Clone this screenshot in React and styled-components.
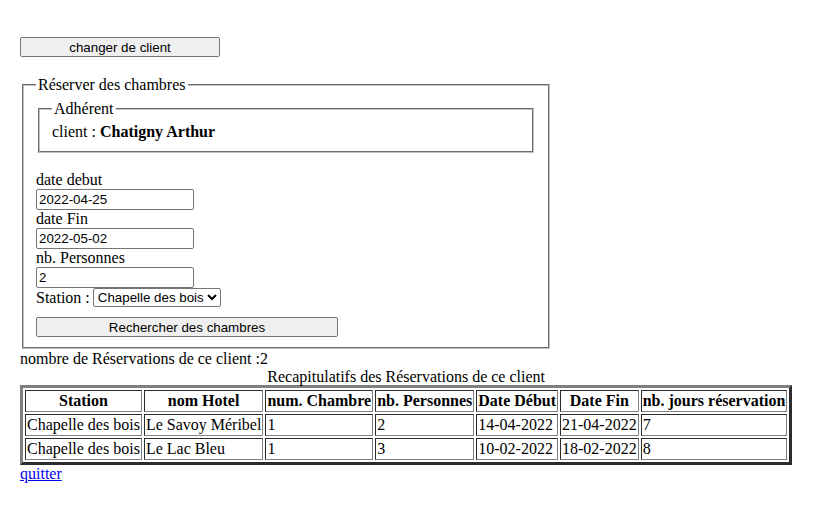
import React from "react";
import styled, { createGlobalStyle } from "styled-components";

const GlobalStyle = createGlobalStyle`
  body {
    margin: 8px;
    font-family: "Liberation Serif", "Times New Roman", serif;
    font-size: 16px;
    color: #000;
    background: #fff;
  }
`;

const Page = styled.div`
  padding: 29px 0 0 12px;
`;

const ControlFont = `
  font-family: "Liberation Sans", Arial, sans-serif;
  font-size: 13.3333px;
`;

const WideButton = styled.button`
  ${ControlFont}
  display: block;
  box-sizing: border-box;
  width: ${(p) => p.$width}px;
  height: 20px;
  margin: ${(p) => p.$margin || "0"};
  padding: 0 6px;
  color: #000;
  background: #efefef;
  border: 1px solid #767676;
  border-radius: 2px;
`;

const Fieldset = styled.fieldset`
  box-sizing: border-box;
  width: ${(p) => (p.$width ? `${p.$width}px` : "auto")};
  margin: ${(p) => p.$margin || "0 2px"};
  padding: 0.35em 0.75em 0.625em;
  border: 2px groove rgb(192, 192, 192);
  min-width: 0;
`;

const Legend = styled.legend`
  padding: 0 2px;
`;

const ClientLine = styled.div`
  line-height: 18px;
`;

const Form = styled.div`
  margin-top: 18px;
`;

const Label = styled.div`
  line-height: 18px;
  height: 18px;
`;

const TextInput = styled.input`
  ${ControlFont}
  display: block;
  box-sizing: border-box;
  width: 158px;
  height: 21px;
  margin: 0;
  padding: 1px 2px;
  border: 1px solid #767676;
  border-radius: 2px;
  color: #000;
  background: #fff;
`;

const StationRow = styled.div`
  display: flex;
  align-items: center;
  gap: 3px;
  height: 19px;
  margin-bottom: 10px;
  line-height: 18px;
`;

const Select = styled.select`
  ${ControlFont}
  height: 19px;
  margin: 0;
  padding: 0;
  border: 1px solid #767676;
  border-radius: 2px;
  color: #000;
  background: #fff;
`;

const Info = styled.div`
  line-height: 18px;
  margin-top: 1px;
`;

const Table = styled.table`
  border: 3px outset grey;
  border-collapse: separate;
  border-spacing: 2px;
`;

const Caption = styled.caption`
  line-height: 16px;
  padding-top: 1px;
`;

const HeadCell = styled.th`
  border: 1px inset grey;
  padding: 1px;
  font-weight: bold;
  text-align: center;
  white-space: nowrap;
  line-height: 18px;
`;

const Cell = styled.td`
  border: 1px inset grey;
  padding: 1px;
  white-space: nowrap;
  line-height: 18px;
`;

const QuitLink = styled.a`
  color: #0000ee;
  text-decoration: underline;
  line-height: 18px;
`;

const headers = [
  "Station",
  "nom Hotel",
  "num. Chambre",
  "nb. Personnes",
  "Date Début",
  "Date Fin",
  "nb. jours réservation",
];

const rows = [
  ["Chapelle des bois", "Le Savoy Méribel", "1", "2", "14-04-2022", "21-04-2022", "7"],
  ["Chapelle des bois", "Le Lac Bleu", "1", "3", "10-02-2022", "18-02-2022", "8"],
];

export default function App() {
  return (
    <>
      <GlobalStyle />
      <Page>
        <WideButton type="button" $width={200}>
          changer de client
        </WideButton>
        <Fieldset $width={528} $margin="19px 2px 0">
          <Legend>Réserver des chambres</Legend>
          <Fieldset>
            <Legend>Adhérent</Legend>
            <ClientLine>
              client : <b>Chatigny Arthur</b>
            </ClientLine>
          </Fieldset>
          <Form>
            <Label>date debut</Label>
            <TextInput type="text" defaultValue="2022-04-25" />
            <Label>date Fin</Label>
            <TextInput type="text" defaultValue="2022-05-02" />
            <Label>nb. Personnes</Label>
            <TextInput type="text" defaultValue="2" />
            <StationRow>
              Station :
              <Select defaultValue="Chapelle des bois">
                <option>Chapelle des bois</option>
                <option>Le Lac Bleu</option>
              </Select>
            </StationRow>
            <WideButton type="button" $width={302}>
              Rechercher des chambres
            </WideButton>
          </Form>
        </Fieldset>
        <Info>nombre de Réservations de ce client :2</Info>
        <Table>
          <Caption>Recapitulatifs des Réservations de ce client</Caption>
          <thead>
            <tr>
              {headers.map((h) => (
                <HeadCell key={h}>{h}</HeadCell>
              ))}
            </tr>
          </thead>
          <tbody>
            {rows.map((r, i) => (
              <tr key={i}>
                {r.map((c, j) => (
                  <Cell key={j}>{c}</Cell>
                ))}
              </tr>
            ))}
          </tbody>
        </Table>
        <QuitLink href="#">quitter</QuitLink>
      </Page>
    </>
  );
}
